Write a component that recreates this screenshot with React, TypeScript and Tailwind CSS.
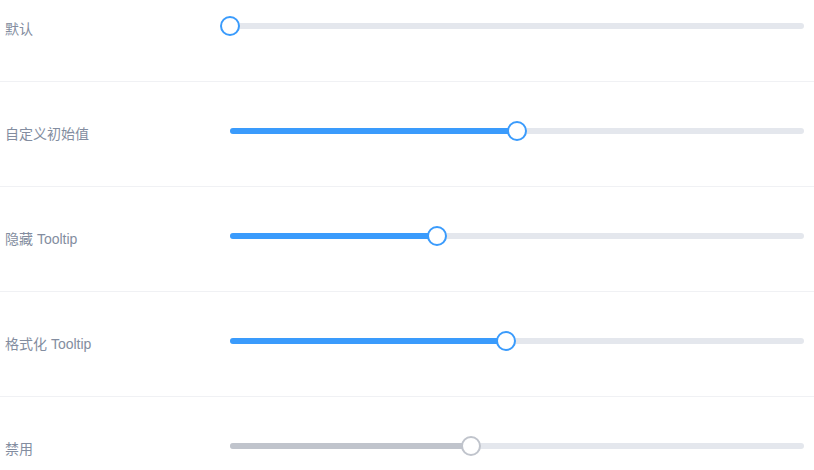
import React from "react";

type Row = { label: string; value: number; disabled?: boolean };

const rows: Row[] = [
  { label: "默认", value: 0 },
  { label: "自定义初始值", value: 50 },
  { label: "隐藏 Tooltip", value: 36 },
  { label: "格式化 Tooltip", value: 48 },
  { label: "禁用", value: 42, disabled: true },
];

function Slider({ value, disabled }: { value: number; disabled?: boolean }) {
  return (
    <div className="relative h-[6px] flex-1 rounded-full bg-[#e4e7ed]">
      <div
        className={
          "absolute left-0 top-0 h-full rounded-full " +
          (disabled ? "bg-[#c0c4cc]" : "bg-[#3a9bfc]")
        }
        style={{ width: `${value}%` }}
      />
      <div
        className={
          "absolute top-1/2 h-[20px] w-[20px] -translate-x-1/2 -translate-y-1/2 rounded-full border-2 bg-white " +
          (disabled ? "border-[#c0c4cc]" : "border-[#3a9bfc]")
        }
        style={{ left: `${value}%` }}
      />
    </div>
  );
}

export default function App() {
  return (
    <div
      className="w-[814px] bg-white"
      style={{ fontFamily: '"Liberation Sans", "Noto Sans CJK SC", sans-serif' }}
    >
      {rows.map((r, i) => (
        <div
          key={i}
          className={
            "pb-[29px] " +
            (i === 0 ? "pt-0 " : "pt-[23px] ") +
            (i < rows.length - 1 ? "border-b border-[#f0f1f4]" : "")
          }
        >
          <div className="flex h-[52px] items-center pr-[10px]">
            <div className="mt-[6px] w-[230px] shrink-0 pl-[5px] text-[14px] text-[#838da0]">
              {r.label}
            </div>
            <Slider value={r.value} disabled={r.disabled} />
          </div>
        </div>
      ))}
    </div>
  );
}
